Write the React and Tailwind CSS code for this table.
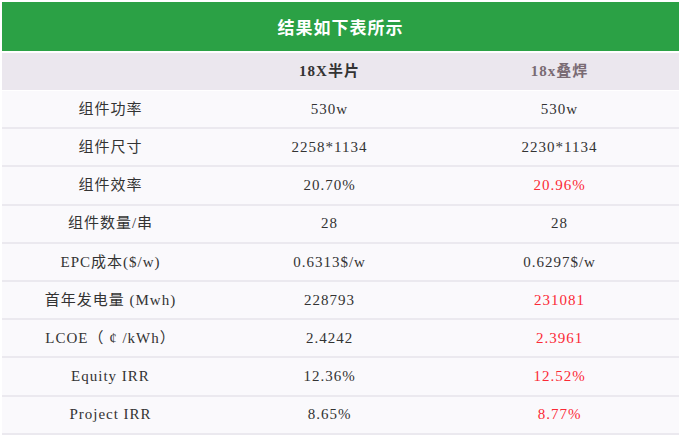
const rows = [
  { label: '组件功率', a: '530w', b: '530w' },
  { label: '组件尺寸', a: '2258*1134', b: '2230*1134' },
  { label: '组件效率', a: '20.70%', b: '20.96%', hot: true },
  { label: '组件数量/串', a: '28', b: '28' },
  { label: 'EPC成本($/w)', a: '0.6313$/w', b: '0.6297$/w' },
  { label: '首年发电量 (Mwh)', a: '228793', b: '231081', hot: true },
  { label: 'LCOE（ ¢ /kWh）', a: '2.4242', b: '2.3961', hot: true },
  { label: 'Equity IRR', a: '12.36%', b: '12.52%', hot: true },
  { label: 'Project IRR', a: '8.65%', b: '8.77%', hot: true }
];

const serif = { fontFamily: '"Liberation Serif", "Noto Sans CJK SC", serif' };

export default function App() {
  return (
    <div className="w-[681px] h-[437px] bg-white p-[2px] overflow-hidden">
      <div
        className="flex h-[49px] items-center justify-center bg-[#2ba145] text-[17px] font-bold tracking-[1px] text-white"
        style={{ fontFamily: '"Noto Sans CJK SC", "Noto Sans", sans-serif' }}
      >
        结果如下表所示
      </div>
      <div
        className="mt-[2px] grid h-[37px] grid-cols-[217px_221px_1fr] items-center bg-[#ebe7ee] text-[15px] font-bold tracking-[1px]"
        style={serif}
      >
        <div />
        <div className="text-center text-[#333]">18X半片</div>
        <div className="text-center text-[#7a6b74]">18x叠焊</div>
      </div>
      <div className="mt-[1px]" style={serif}>
        {rows.map((r) => (
          <div
            key={r.label}
            className="grid h-[38.2px] grid-cols-[217px_221px_1fr] items-center border-b-[2px] border-[#ebe9ef] bg-[#faf9fc] text-[15px] tracking-[1px] text-[#333]"
          >
            <div className="text-center">{r.label}</div>
            <div className="text-center">{r.a}</div>
            <div className={`text-center ${r.hot ? 'text-[#fb2a36]' : ''}`}>{r.b}</div>
          </div>
        ))}
      </div>
    </div>
  );
}
